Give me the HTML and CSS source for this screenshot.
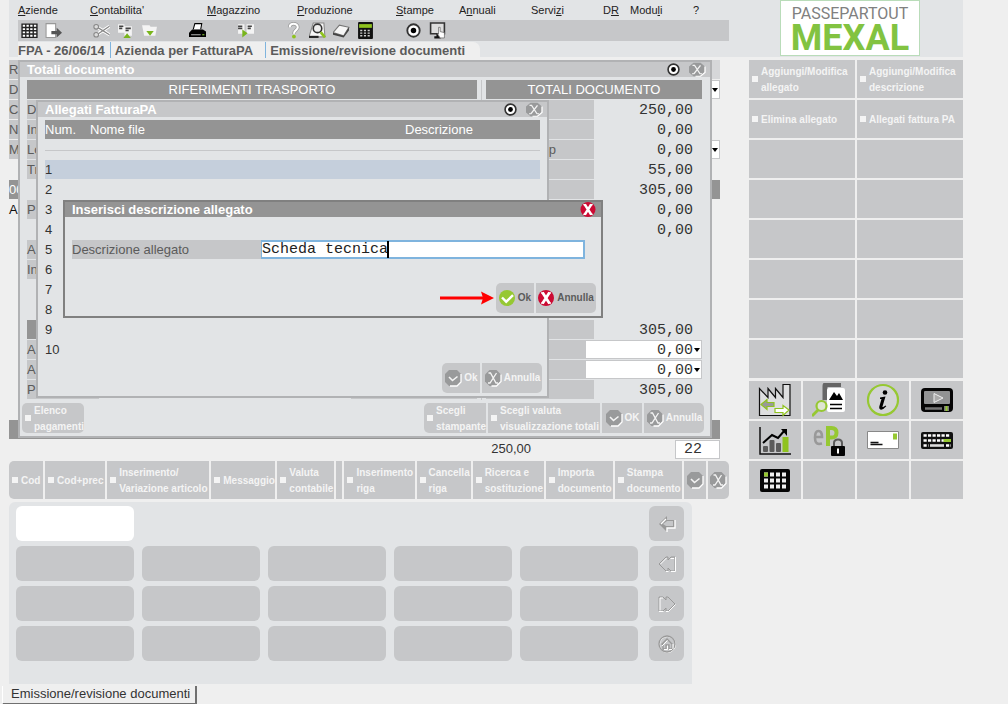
FILE: index.html
```html
<!DOCTYPE html>
<html lang="it">
<head>
<meta charset="utf-8">
<title>Passepartout Mexal</title>
<link rel="stylesheet" href="styles.css">
</head>
<body>
<svg class="defs" aria-hidden="true">
  <symbol id="x-off" viewBox="0 0 18 18" preserveAspectRatio="none"><path d="M5.500 1h7l4.500 4.500v7l-4.500 4.500h-7l-4.500-4.500v-7z" fill="#999a9b"/><path d="M17 5.500v7l-4.500 4.500h-5" fill="none" stroke="#fff" stroke-width="1.300"/><path d="M4.500 4h2l5.500 10h2M12.500 4L6 14H4" fill="none" stroke="#f4f4f4" stroke-width="1.300"/></symbol>
  <symbol id="ok-off" viewBox="0 0 18 18"><path d="M5 1h8l4 4v8l-4 4H5l-4-4V5z" fill="#999a9b"/><path d="M17 5v8l-4 4H6" fill="none" stroke="#fff" stroke-width="1.300"/><path d="M5 8l3.500 3.500 5-4" fill="none" stroke="#f4f4f4" stroke-width="1.600"/></symbol>
  <symbol id="x-on" viewBox="0 0 16 16"><circle cx="8" cy="8" r="8" fill="#cc0a33"/><path d="M4.500 2.500l7 11M11.500 2.500l-7 11" stroke="#fff" stroke-width="2.800"/><path d="M3 2.800h3M10 2.800h3M3 13.200h3M10 13.200h3" stroke="#fff" stroke-width="1.200"/></symbol>
  <symbol id="ok-on" viewBox="0 0 16 16"><circle cx="8" cy="8" r="8" fill="#96c832"/><path d="M3 7.500l4.200 4.200L14 5.200" fill="none" stroke="#fff" stroke-width="2.400"/></symbol>
  <symbol id="target" viewBox="0 0 12 12"><circle cx="6" cy="6" r="5" fill="#fff" stroke="#333" stroke-width="1.500"/><circle cx="6" cy="6" r="2.200" fill="#000"/></symbol>
</svg>
<div class="app">
  <header class="top">
    <div class="bars">
      <nav class="menu" aria-label="Menu principale">
        <a href="#"><u>A</u>ziende</a><a href="#"><u>C</u>ontabilita'</a><a href="#"><u>M</u>agazzino</a><a href="#"><u>P</u>roduzione</a><a href="#"><u>S</u>tampe</a><a href="#">A<u>n</u>nuali</a><a href="#">Servi<u>z</u>i</a><a href="#">D<u>R</u></a><a href="#">Modu<u>l</u>i</a><a href="#">?</a>
      </nav>
      <div class="tools">
        <button aria-label="Griglia"><svg viewBox="0 0 16 16"><path d="M1 2h14v12.500H1z" fill="#fff"/><path d="M1 2h14v12.500H1zM1 5.200h14M1 8.200h14M1 11.300h14M4.500 2v12.500M8 2v12.500M11.500 2v12.500" fill="none" stroke="#222" stroke-width="1.300"/></svg></button>
        <button aria-label="Esci"><svg viewBox="0 0 16 16"><path d="M1 1.500h9v13H1z" fill="#fff" stroke="#999"/><path d="M6 8.500h5V5.500l5 4.500-5 4.500v-3H6z" fill="#555"/></svg></button>
        <button class="s1" aria-label="Taglia"><svg viewBox="0 0 16 16"><path d="M5 5.500L15.500 12M5 11L15.500 4" stroke="#fff" stroke-width="3"/><path d="M5 5.500L15.500 12M5 11L15.500 4" stroke="#888" stroke-width="1.200"/><g fill="#ddd" stroke="#888"><circle cx="3" cy="4.500" r="2.200"/><circle cx="3" cy="12" r="2.200"/></g></svg></button>
        <button aria-label="Copia"><svg viewBox="0 0 16 16"><path d="M1 2h6v8H1zM7 4h7v9H7z" fill="#f4f4f4"/><path d="M2 4h4M2 6h3M8 6h5M8 8h3" stroke="#444" stroke-width="1.500"/><path d="M6 15l3.500-4.500L13 15z" fill="#79b51c"/></svg></button>
        <button aria-label="Incolla"><svg viewBox="0 0 16 16"><path d="M1 3h7l1 1.500h6L13.500 13H3z" fill="#f4f4f4"/><path d="M5 8.500h7L8.500 13z" fill="#79b51c"/></svg></button>
        <button class="s1" aria-label="Stampa"><svg viewBox="0 0 16 16"><path d="M4 7L5.500 1.500H12L11 7" fill="#fff" stroke="#000"/><path d="M0 10l3-3h10l3 2v5H0z" fill="#000"/><path d="M2 12h9" stroke="#aaa"/><path d="M12.500 12h2" stroke="#8c3"/></svg></button>
        <button class="s1" aria-label="Collega"><svg viewBox="0 0 16 16"><path d="M1 2h6v9H1zM9 2h7v9H9z" fill="#f4f4f4"/><path d="M1 4h4M1 6h4M10 4h4M10 6h3" stroke="#444" stroke-width="1.500"/><path d="M5 7l5 3.500-5 4z" fill="#79b51c"/></svg></button>
        <button class="s1" aria-label="Aiuto"><svg viewBox="0 0 16 16"><path d="M4.500 5C4 .5 12 .5 12 5c0 2.800-3.600 2.500-3.600 6" fill="none" stroke="#999" stroke-width="3.400"/><path d="M4.500 5C4 .5 12 .5 12 5c0 2.800-3.600 2.500-3.600 6" fill="none" stroke="#fff" stroke-width="2"/><circle cx="8.400" cy="13.700" r="1.800" fill="#8fc31f"/></svg></button>
        <button aria-label="Anteprima"><svg viewBox="0 0 16 16"><path d="M0 14L4 1h10l1 13z" fill="#f8f8f8" stroke="#888"/><path d="M0 14h9" stroke="#222" stroke-width="2"/><circle cx="8" cy="6" r="4" fill="#eee" stroke="#333" stroke-width="1.500"/><path d="M11 9.500l4 5" stroke="#8fc31f" stroke-width="2.500"/></svg></button>
        <button aria-label="Archivio"><svg viewBox="0 0 16 16"><path d="M0 10l6-7 9 2-5 8z" fill="#f6f6f6" stroke="#777"/><path d="M0 10l10 3 5-8v3l-5 6.500L0 12z" fill="#444"/></svg></button>
        <button aria-label="Calcolatrice"><svg viewBox="0 0 16 16"><rect x="1" y="0" width="14" height="16" rx="1" fill="#111"/><path d="M2 2h12v3.500H2z" fill="#8fc31f"/><path d="M3 8h10M3 10.500h10M3 13h10" stroke="#ccc" stroke-width="1.300" stroke-dasharray="2 1.500"/></svg></button>
        <button class="s1" aria-label="Seleziona"><svg viewBox="0 0 16 16"><use href="#target" x="1" y="1" width="14" height="14"/></svg></button>
        <button aria-label="Schermo"><svg viewBox="0 0 16 16"><path d="M1.500 1h13v10h-13z" fill="#ddd" stroke="#333" stroke-width="1.500"/><path d="M5 14.500h6M8 11v3" stroke="#111" stroke-width="2"/><path d="M9 5l1.500 0V9l4 1v5h-4L8 11l1 0z" fill="#fff" stroke="#666" stroke-width=".7"/></svg></button>
      </div>
      <div class="crumbs"><span>FPA - 26/06/14</span><span>Azienda per FatturaPA</span><span class="here">Emissione/revisione documenti</span></div>
    </div>
    <div class="brand"><div class="logo"><span class="l1">PASSEPARTOUT</span><span class="l2">MEXAL</span></div></div>
  </header>

  <main class="work">
    <section class="desk">
      <div class="doc">
        <div class="drow wide">R</div><div class="drow">D<span class="pick"><select aria-label="Opzione 1"><option></option></select></span></div><div class="drow">C</div><div class="drow">N</div><div class="drow">M<span class="pick"><select aria-label="Opzione 2"><option></option></select></span></div>
        <div class="drow head">00</div><div class="drow plain">A</div>
        <div class="drow foot"></div>
      </div>

      <section class="win totals">
        <div class="title"><h2>Totali documento</h2><button aria-label="Opzioni"><svg class="tg"><use href="#target"/></svg></button><button aria-label="Chiudi"><svg class="cl"><use href="#x-off"/></svg></button></div>
        <div class="cols">
          <div class="left">
            <h3>RIFERIMENTI TRASPORTO</h3>
            <div class="lab">D</div><div class="lab">In</div><div class="lab">Lo</div><div class="lab">Tr</div><div></div><div class="lab">P</div><div></div><div class="lab">A</div><div class="lab">In</div><div></div><div></div><div class="dark"></div><div class="lab">A</div><div class="lab">A</div><div class="pair"><div class="lab">P</div><div class="lab"></div></div>
          </div>
          <div class="right">
            <h3>TOTALI DOCUMENTO</h3>
            <div class="tot"><i></i><b>250,00</b></div>
            <div class="tot"><i></i><b>0,00</b></div>
            <div class="tot"><i>p</i><b>0,00</b></div>
            <div class="tot"><i></i><b>55,00</b></div>
            <div class="tot"><i></i><b>305,00</b></div>
            <div class="tot"><i></i><b>0,00</b></div>
            <div class="tot"><i></i><b>0,00</b></div>
            <div></div><div></div><div></div><div></div>
            <div class="tot"><i></i><b>305,00</b></div>
            <div class="tot edit"><i></i><span class="pick"><select aria-label="Acconto"><option>0,00</option></select></span></div>
            <div class="tot edit"><i></i><span class="pick"><select aria-label="Abbuono"><option>0,00</option></select></span></div>
            <div class="tot"><i></i><b>305,00</b></div>
          </div>
        </div>
        <div class="acts">
          <button class="cmd solo w62"><span>Elenco<br>pagamenti</span></button>
          <button class="cmd first w62"><span>Scegli<br>stampante</span></button>
          <button class="cmd w112"><span>Scegli valuta<br>visualizzazione totali</span></button>
          <button class="ic w40"><svg><use href="#ok-off"/></svg>OK</button>
          <button class="ic last w60"><svg><use href="#x-off"/></svg>Annulla</button>
        </div>
      </section>

      <section class="win files">
        <div class="title"><h2>Allegati FatturaPA</h2><button aria-label="Opzioni"><svg class="tg"><use href="#target"/></svg></button><button aria-label="Chiudi"><svg class="cl"><use href="#x-off"/></svg></button></div>
        <table>
          <thead><tr><th class="n">Num.</th><th>Nome file</th><th class="d">Descrizione</th></tr></thead>
          <tbody>
            <tr class="rule"><td colspan="3"></td></tr>
            <tr class="sel"><td>1</td><td></td><td></td></tr>
            <tr><td>2</td><td></td><td></td></tr><tr><td>3</td><td></td><td></td></tr><tr><td>4</td><td></td><td></td></tr><tr><td>5</td><td></td><td></td></tr><tr><td>6</td><td></td><td></td></tr><tr><td>7</td><td></td><td></td></tr><tr><td>8</td><td></td><td></td></tr><tr><td>9</td><td></td><td></td></tr><tr><td>10</td><td></td><td></td></tr>
          </tbody>
        </table>
        <div class="acts">
          <button class="ic first w38"><svg><use href="#ok-off"/></svg>Ok</button>
          <button class="ic last w60"><svg><use href="#x-off"/></svg>Annulla</button>
        </div>
      </section>

      <section class="win dialog" role="dialog" aria-labelledby="dt">
        <div class="title"><h2 id="dt">Inserisci descrizione allegato</h2><button aria-label="Chiudi"><svg class="cx"><use href="#x-on"/></svg></button></div>
        <div class="field"><label for="descr">Descrizione allegato</label><div class="entry"><input id="descr" type="text" value="Scheda tecnica"><span class="caret"></span></div></div>
        <div class="acts">
          <svg class="arrow" viewBox="0 0 54 14"><path d="M0 7h44" stroke="#f00" stroke-width="3"/><path d="M54 7L41 .5 43 7l-2 6.500z" fill="#f00"/></svg>
          <button class="ic first w38"><svg><use href="#ok-on"/></svg>Ok</button>
          <button class="ic last w60"><svg><use href="#x-on"/></svg>Annulla</button>
        </div>
      </section>
    </section>

    <div class="sum"><output>250,00</output><input type="text" value="22" aria-label="Aliquota"></div>

    <div class="cmds">
      <button class="cmd first"><span>Cod</span></button>
      <button class="cmd"><span>Cod+prec</span></button>
      <button class="cmd"><span>Inserimento/<br>Variazione articolo</span></button>
      <button class="cmd"><span>Messaggio</span></button>
      <button class="cmd"><span>Valuta<br>contabile</span></button>
      <div class="fill"></div>
      <button class="cmd"><span>Inserimento<br>riga</span></button>
      <button class="cmd"><span>Cancella<br>riga</span></button>
      <button class="cmd"><span>Ricerca e<br>sostituzione</span></button>
      <button class="cmd"><span>Importa<br>documento</span></button>
      <button class="cmd"><span>Stampa<br>documento</span></button>
      <button class="ic" aria-label="Conferma"><svg><use href="#ok-off"/></svg></button>
      <button class="ic last" aria-label="Annulla"><svg><use href="#x-off"/></svg></button>
    </div>

    <section class="pad">
      <input type="text" aria-label="Ricerca">
      <button class="nav" aria-label="Indietro"><svg viewBox="0 0 18 18"><path d="M1 9l8-8v4h8v8H9v4z" fill="#999"/><path d="M9 17v-4h8V5M3 9l5-5" fill="none" stroke="#fff" stroke-width="1.400"/><path d="M5 9l4-3h6v5H8z" fill="#c6c7c9"/></svg></button>
      <button aria-label="Tasto 1"></button><button aria-label="Tasto 2"></button><button aria-label="Tasto 3"></button><button aria-label="Tasto 4"></button><button aria-label="Tasto 5"></button>
      <button class="nav" aria-label="Pagina precedente"><svg viewBox="0 0 18 18"><path d="M1 9l7-7h2v3l3-3h4v14h-4l-3-3v3H8z" fill="none" stroke="#999"/><path d="M2.500 9l6-6M12.500 3.500H16M17.500 2v14.500H13M10.500 16.500H8" fill="none" stroke="#fff"/></svg></button>
      <button aria-label="Tasto 6"></button><button aria-label="Tasto 7"></button><button aria-label="Tasto 8"></button><button aria-label="Tasto 9"></button><button aria-label="Tasto 10"></button>
      <button class="nav" aria-label="Pagina successiva"><svg viewBox="0 0 18 18"><path d="M17 9l-7-7H8v3L5 2H1v14h4l3-3v3h2z" fill="none" stroke="#999"/><path d="M2 15.500V3h3M17.500 9.500l-7 7H8M5.500 16.500H1" fill="none" stroke="#fff"/></svg></button>
      <button aria-label="Tasto 11"></button><button aria-label="Tasto 12"></button><button aria-label="Tasto 13"></button><button aria-label="Tasto 14"></button><button aria-label="Tasto 15"></button>
      <button class="nav" aria-label="Home"><svg viewBox="0 0 18 18"><circle cx="9.500" cy="9.500" r="8" fill="none" stroke="#fff"/><circle cx="9" cy="9" r="8" fill="none" stroke="#999" stroke-width="1.300"/><path d="M3.500 9.500L9 4l5.500 5.500M5 8.500V14h3v-4h3v4h3V8.500" fill="none" stroke="#999" stroke-width="1.300"/><path d="M4 11l5.500-5.500M6 14.500h3.500v-4M11 14.500h3M15 14V9" fill="none" stroke="#fff"/></svg></button>
    </section>
  </main>

  <aside class="side">
    <div class="fn">
      <button class="cmd"><span>Aggiungi/Modifica<br>allegato</span></button><button class="cmd"><span>Aggiungi/Modifica<br>descrizione</span></button>
      <button class="cmd"><span>Elimina allegato</span></button><button class="cmd"><span>Allegati fattura PA</span></button>
      <div></div><div></div><div></div><div></div><div></div><div></div><div></div><div></div><div></div><div></div><div></div><div></div>
    </div>
    <div class="apps">
      <button aria-label="Azienda"><svg viewBox="0 0 34 34"><path d="M1.500 32.500v-27l8.500 9v-9l7.500 9v-9l7.500 9V1.500h7v31z" fill="#dedfe0" stroke="#111" stroke-width="1.200"/><path d="M3 21.500l6-5v3h7v4H9v3z" fill="#999" stroke="#8fc31f" stroke-width="1.200"/><path d="M31 27l-6-4.500v3h-8v4h8v3z" fill="#fff" stroke="#8fc31f" stroke-width="1.200"/></svg></button>
      <button aria-label="Ricerca documenti"><svg viewBox="0 0 34 34"><path d="M13 17V3q0-1.500 1.500-1.500H29" fill="none" stroke="#666" stroke-width="5"/><rect x="15" y="5" width="18" height="24" rx="2" fill="#fff"/><path d="M17 17l5-8 3 4 2-3 4 7z" fill="#000"/><path d="M18 21.500h12M18 25.500h12" stroke="#000" stroke-width="1.500"/><circle cx="9.500" cy="23" r="5" fill="#dfe5d2" stroke="#96c832" stroke-width="2.200"/><path d="M6 27l-6 6" stroke="#96c832" stroke-width="2.800"/></svg></button>
      <button aria-label="Informazioni"><svg viewBox="0 0 34 34"><circle cx="17" cy="17" r="15" fill="#d3d4d6" stroke="#96c832" stroke-width="2.200"/><circle cx="19" cy="9.500" r="2.300"/><path d="M14 14.500l5.500-1-3 10q-.4 1.600 3-1l.8.8q-3.500 4-6 3.200-1.600-.8-1-3l2.200-7.500H14z"/></svg></button>
      <button aria-label="Video"><svg viewBox="0 0 34 34"><rect x="1" y="5" width="32" height="24" rx="4" fill="#050505"/><rect x="4" y="8" width="26" height="13" rx="1" fill="#929394"/><path d="M14 10.500v9l9-4.500z" fill="#aaa" stroke="#eee"/><path d="M5 25.500h17" stroke="#777" stroke-width="2.500"/><path d="M24 23h5v5h-5z" fill="#777"/><path d="M25.500 23h2v5h-2z" fill="#96c832"/></svg></button>
      <button aria-label="Statistiche"><svg viewBox="0 0 34 34"><path d="M2 4v27h31" fill="none" stroke="#111" stroke-width="1.500"/><g fill="#5b5b5b"><rect x="5" y="23" width="5" height="6" rx="1"/><rect x="11.500" y="17" width="5" height="12" rx="1"/><rect x="18" y="20" width="5" height="9" rx="1"/></g><path d="M24.500 14h6v15h-6z" fill="#8fc31f"/><path d="M5 20l9-8 6 3 7-8" fill="none" stroke="#000" stroke-width="2"/><path d="M23 6h6v7z"/></svg></button>
      <button aria-label="ePass"><svg viewBox="0 0 34 34"><path d="M3 14h7q0-6-3.500-6T3 14.500 7 21l3-.6" fill="none" stroke="#999" stroke-width="2.600"/><path d="M16 23V5h3.500q5 0 5 4.800t-5 4.700H16" fill="none" stroke="#96c832" stroke-width="4"/><path d="M22 24v-4q0-3.500 4-3.500t4 3.500v4" fill="none" stroke="#5b5b5b" stroke-width="2"/><rect x="19" y="23" width="14" height="10" rx="1" fill="#050505"/><path d="M26 25.500v5" stroke="#fff" stroke-width="2"/></svg></button>
      <button aria-label="Posta"><svg viewBox="0 0 34 34"><path d="M1.500 8.500h31v17h-31z" fill="#fff" stroke="#888"/><path d="M27 10.500h4v6h-4z" fill="#96c832"/><path d="M4.500 19.500h8M4.500 21.500h12" stroke="#111" stroke-width="1.400"/></svg></button>
      <button aria-label="Tastiera"><svg viewBox="0 0 34 34"><rect x="1" y="9" width="32" height="17" rx="2" fill="#111"/><g stroke="#fff" stroke-width="2.600" stroke-dasharray="3.200 1.300"><path d="M3.500 12.500h27M3.500 17.500h27M3.500 22.500h5M26 22.500h5"/></g><path d="M10 22.500h14" stroke="#ddd" stroke-width="2.600"/><path d="M23.500 16h7.500v3h-7.500z" fill="#96c832"/></svg></button>
      <button aria-label="Tastierino"><svg viewBox="0 0 34 34"><rect x="2" y="6" width="30" height="23" rx="2" fill="#050505"/><g stroke="#eee" stroke-width="4" stroke-dasharray="4 2"><path d="M6 11.500h22M6 17.500h22M6 23.500h22"/></g><path d="M6 9.500h4v4H6z" fill="#96c832"/></svg></button>
      <div></div><div></div><div></div>
    </div>
  </aside>

  <footer class="tabs"><button>Emissione/revisione documenti</button></footer>
</div>
</body>
</html>
```
FILE: styles.css
```css
* { box-sizing: border-box; }
body { margin: 0; background: #efefef; font: 13px/19px "Liberation Sans", Arial, sans-serif; color: #333; }
button, input, select { font: inherit; color: inherit; border: 0; padding: 0; margin: 0; background: none; border-radius: 0; }
a { color: inherit; text-decoration: none; }
h2, h3 { margin: 0; font-size: 13px; }
.defs { position: absolute; width: 0; height: 0; }

.app { display: grid; grid-template-columns: minmax(0, 1fr) 214px; column-gap: 20px; padding: 0 45px 0 9px; }

/* header */
.top { grid-column: 1 / -1; display: flex; height: 57px; margin-bottom: 3px; background: #e2e4e6; }
.bars { flex: 1; padding-left: 9px; }
.menu { display: grid; grid-template-columns: 72fr 117fr 90fr 99fr 63fr 72fr 72fr 27fr 63fr 36fr; height: 20px; line-height: 21px; font-size: 11px; color: #222; }
.tools { display: flex; height: 21px; background: #c6c7c9; }
.tools button { width: 24px; padding-right: 2px; display: flex; justify-content: center; align-items: center; }
.tools svg { width: 17px; height: 17px; flex: none; }
.tools .s1 { margin-left: 24px; }
.crumbs { display: inline-flex; height: 16px; line-height: 18px; padding-right: 15px; background: #efefef; border-top-right-radius: 7px; font-weight: bold; color: #5b5b5b; }
.crumbs span + span { margin-left: 5px; padding-left: 4px; border-left: 1px solid #7fb4de; }
.crumbs .here + .here, .crumbs span.here { margin-left: 12px; }
.brand { width: 234px; padding-left: 51px; }
.logo { width: 140px; height: 56px; background: #fff; border: 1px solid #b9dcb9; display: flex; flex-direction: column; align-items: center; white-space: nowrap; }
.l1 { font: 16px/20px Roboto, sans-serif; color: #808080; margin-top: 3px; }
.l2 { font: bold 36px/28px Roboto, sans-serif; color: #82c341; }

/* desktop */
.work { min-width: 0; }
.desk { position: relative; height: 379px; }
.doc { display: flex; flex-direction: column; height: 379px; margin-right: 9px; }
.drow { display: flex; height: 19px; margin-bottom: 1px; background: linear-gradient(#c6c7c9, #c6c7c9) 0 0 / 80px 19px no-repeat; color: #5b5b5b; }
.drow.wide { background: linear-gradient(90deg, #c6c7c9 80px, #d6d7d9 80px); }
.drow.head { margin-top: 20px; background: #949494; color: #fff; }
.drow.plain { background: none; color: #111; }
.drow.foot { margin-top: auto; margin-bottom: 0; background: #949494; }
.drow .pick { margin-left: auto; width: 60px; }

.pick { position: relative; display: block; height: 19px; background: #fff; border: 1px solid #c6c7c9; border-width: 1px 1px 1px 0; }
.pick select { display: block; width: 100%; height: 17px; appearance: none; padding-right: 8px; text-align: right; text-align-last: right; }
.pick::after { content: ""; position: absolute; right: 1px; top: 7px; border: 3px solid transparent; border-top: 4px solid #000; border-bottom: 0; pointer-events: none; }

.win { position: absolute; display: flex; flex-direction: column; background: #e2e4e6; border: 2px solid #b1b2b4; }
.title { display: flex; align-items: center; height: 15px; background: #c6c7c9; padding: 0 4px 0 7px; color: #fff; }
.title h2 { flex: 1; line-height: 15px; }
.title button { display: flex; margin-left: 8px; }
.title .tg { width: 13px; height: 13px; }
.title .cl { width: 18px; height: 15px; }
.title .cx { width: 16px; height: 15px; }
.dialog .title { padding-right: 5px; }

.totals { left: 9px; right: 17px; top: 0; bottom: 1px; }
.cols { flex: 1; display: grid; grid-template-columns: minmax(0, 1fr) 216px; column-gap: 9px; padding: 3px 8px 0 7px; background: linear-gradient(#c6c7c9, #c6c7c9) right 228px top 3px / 1px 320px no-repeat; }
.left, .right { display: grid; grid-auto-rows: 19px; row-gap: 1px; align-content: start; }
.cols h3 { background: #949494; color: #fff; font-weight: normal; text-align: center; }
.lab { width: 72px; background: #c6c7c9; color: #5b5b5b; }
.pair { display: flex; justify-content: space-between; }
.pair .lab + .lab { width: 126px; }
.dark { background: #949494; }
.tot { display: flex; font-family: "Liberation Mono", monospace; font-size: 15px; }
.tot i { width: 108px; padding-right: 38px; background: #c6c7c9; font: 13px/19px "Liberation Sans", sans-serif; text-align: right; color: #5b5b5b; }
.tot b { flex: 1; padding-right: 9px; font-weight: normal; text-align: right; line-height: 21px; }
.edit i { width: 100px; }
.edit .pick { flex: 1; }
.totals .acts { padding: 0 6px 3px 2px; }

.files { left: 27px; width: 513px; top: 40px; height: 298px; }
.files table { flex: none; margin: 2px 7px 0; border-spacing: 0 1px; table-layout: fixed; }
.files th, .files td { height: 19px; padding: 0; font-weight: normal; text-align: left; color: #333; }
.files th { background: #949494; color: #fff; }
.files .n { width: 45px; }
.files .d { width: 135px; }
.files .rule td { background: linear-gradient(#c6c7c9, #c6c7c9) 0 10px / 100% 1px no-repeat; }
.files .sel td { background: #c5cfdc; }
.files .acts, .dialog .acts { margin-top: auto; padding: 0 5px 3px; }

.dialog { left: 54px; width: 540px; top: 140px; height: 118px; border-color: #808080; }
.dialog .title { background: #949494; }
.field { display: flex; margin: 23px 16px 0 7px; }
.field label { width: 189px; background: #c6c7c9; color: #5b5b5b; }
.entry { position: relative; flex: 1; }
.entry input { display: block; width: 100%; height: 19px; background: #fff; border: 2px solid #7fb4de; border-left-width: 1px; font: 15px/15px "Liberation Mono", monospace; color: #222; }
.caret { position: absolute; left: 126px; top: 1px; width: 2px; height: 17px; background: #000; }
.arrow { width: 54px; height: 14px; }

/* command buttons */
.acts { display: flex; gap: 2px; justify-content: flex-end; align-items: center; }
.cmd, .ic { display: flex; align-items: center; min-width: 0; background: #c6c7c9; color: #f4f4f4; font-size: 10px; font-weight: bold; line-height: 16px; text-align: left; white-space: nowrap; }
.cmd { padding-left: 3px; gap: 3px; }
.cmd::before { content: ""; flex: none; width: 6px; height: 6px; background: #f4f4f4; }
.acts .cmd, .acts .ic { height: 30px; }
.cmd span { padding-top: 2px; }
.ic { justify-content: center; gap: 2px; }
.ic svg { width: 18px; height: 18px; flex: none; }
.dialog .ic { color: #5b5b5b; gap: 3px; }
.dialog .ic svg { width: 16px; height: 16px; }
.w38 { width: 38px; }
.w40 { width: 40px; }
.w60 { width: 60px; }
.w62 { width: 62px; }
.w112 { width: 112px; }
.first { border-radius: 5px 0 0 5px; }
.last { border-radius: 0 5px 5px 0; }
.solo { border-radius: 5px; margin-right: auto; }

.sum { display: flex; justify-content: flex-end; height: 22px; padding: 1px 9px 2px 0; line-height: 18px; }
.sum output { margin-right: 144px; }
.sum input { width: 45px; height: 19px; background: #fff; border: 1px solid #c6c7c9; padding-left: 8px; font: 15px/17px "Liberation Mono", monospace; }

.cmds { display: grid; grid-template-columns: 34fr 60fr 102fr 64fr 57fr 6fr 70fr 54fr 71fr 67fr 67fr 22fr 21fr; gap: 2px; height: 38px; margin-bottom: 3px; }
.cmds .fill { background: #c6c7c9; }

.pad { display: grid; grid-template-columns: repeat(5, 118fr) 38px; gap: 5px 8px; margin-right: 37px; padding: 4px 8px 23px 7px; background: #e2e4e6; border-radius: 6px 6px 0 0; }
.pad button, .pad input { height: 35px; border-radius: 6px; background: #c6c7c9; }
.pad input { background: #fff; grid-column: 1; padding: 0 6px; min-width: 0; }
.pad .nav { grid-column: 6; margin-left: 3px; display: flex; align-items: center; justify-content: center; }
.nav svg { width: 18px; height: 18px; }

/* side panel */
.fn, .apps { display: grid; gap: 2px; grid-auto-rows: 38px; }
.fn { grid-template-columns: repeat(2, minmax(0, 1fr)); margin-bottom: 3px; }
.apps { grid-template-columns: repeat(4, 1fr); }
.fn div, .apps div, .apps button { background: #c6c7c9; }
.apps button { display: flex; align-items: center; justify-content: center; }
.apps svg { width: 34px; height: 34px; }

.tabs { grid-column: 1 / -1; margin-left: -7px; height: 20px; }
.tabs button { height: 19px; line-height: 15px; padding: 0 5px 3px 8px; border: 1px solid #fff; border-top: 0; border-right: 2px solid #707070; border-bottom: 2px solid #707070; }
```
